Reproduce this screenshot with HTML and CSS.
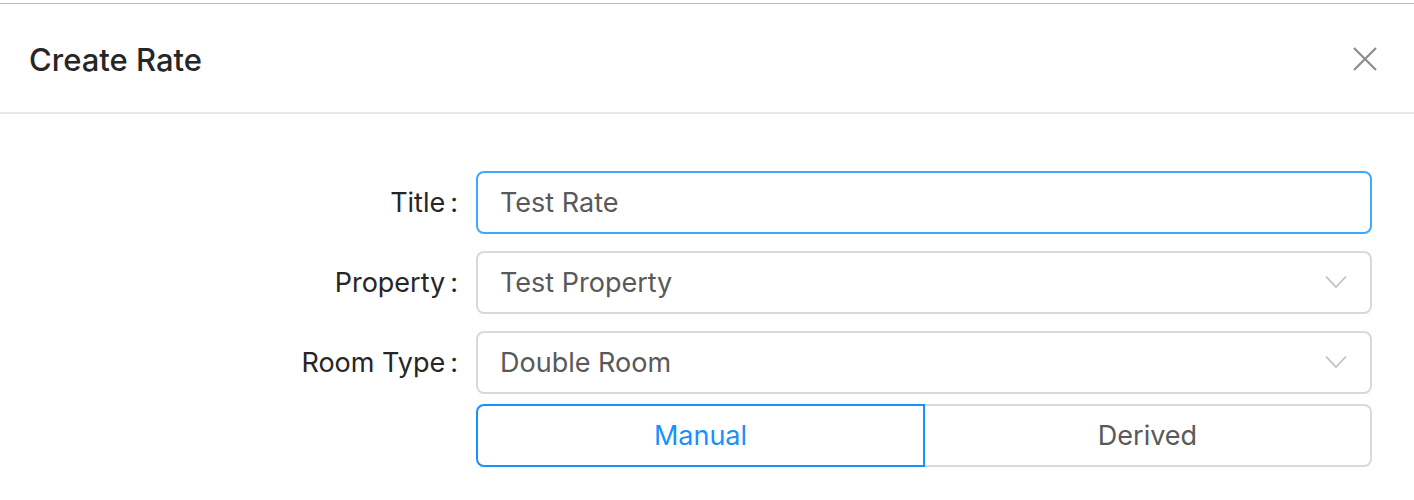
FILE: index.html
```html
<!DOCTYPE html>
<html>
<head>
<meta charset="utf-8">
<link rel="stylesheet" href="styles.css">
</head>
<body>
<div class="modal">
  <div class="header">
    <div class="title">Create Rate</div>
    <svg class="close" width="24" height="24" viewBox="0 0 24 24"><path d="M1 1 L23 23 M23 1 L1 23" stroke="#8c8c8c" stroke-width="2.2" fill="none"/></svg>
  </div>
  <div class="form">
    <div class="label">Title<span class="colon">:</span></div>
    <div class="control input focused">Test Rate</div>

    <div class="label">Property<span class="colon">:</span></div>
    <div class="control input select">Test Property
      <svg class="chev" width="22" height="14" viewBox="0 0 22 14"><path d="M1 1.5 L11 12 L21 1.5" stroke="#bfbfbf" stroke-width="1.8" fill="none"/></svg>
    </div>

    <div class="label">Room Type<span class="colon">:</span></div>
    <div class="control input select">Double Room
      <svg class="chev" width="22" height="14" viewBox="0 0 22 14"><path d="M1 1.5 L11 12 L21 1.5" stroke="#bfbfbf" stroke-width="1.8" fill="none"/></svg>
    </div>

    <div class="label"></div>
    <div class="control segmented">
      <div class="seg active">Manual</div>
      <div class="seg">Derived</div>
    </div>
  </div>
</div>
</body>
</html>
```
FILE: styles.css
```css
html, body {
  margin: 0;
  padding: 0;
  background: #fff;
  font-family: Inter, "Liberation Sans", sans-serif;
}
.modal {
  padding-top: 3px;
}
.header {
  border-top: 1px solid #bdbdbd;
  border-bottom: 2px solid #e8e8e8;
  height: 111px;
  box-sizing: border-box;
  display: flex;
  align-items: center;
  justify-content: space-between;
  padding: 0 37px 0 29px;
}
.title {
  font-size: 31px;
  font-weight: 500;
  color: #262626;
  margin-top: 2px;
}
.close {
  display: block;
  margin-top: 2px;
}
.form {
  display: grid;
  grid-template-columns: 476px 1fr;
  row-gap: 17px;
  padding: 57px 42px 0 0;
}
.label {
  display: flex;
  align-items: center;
  justify-content: flex-end;
  font-size: 27px;
  color: #262626;
}
.colon {
  margin: 0 18px 0 5px;
}
.control {
  height: 63px;
  box-sizing: border-box;
}
.input {
  border: 2px solid #d9d9d9;
  border-radius: 8px;
  display: flex;
  align-items: center;
  padding: 0 22px;
  font-size: 27px;
  color: #595959;
  position: relative;
}
.input.focused {
  border-color: #40a9ff;
}
.chev {
  position: absolute;
  right: 23px;
  top: 22px;
}
.segmented {
  display: flex;
  margin-top: -7px;
}
.seg {
  flex: 1;
  display: flex;
  align-items: center;
  justify-content: center;
  border: 2px solid #d9d9d9;
  font-size: 27px;
  color: #595959;
}
.seg:first-child {
  border-radius: 8px 0 0 8px;
}
.seg:last-child {
  border-left: none;
  border-radius: 0 8px 8px 0;
}
.seg.active {
  border-color: #1890ff;
  color: #1890ff;
}
```
